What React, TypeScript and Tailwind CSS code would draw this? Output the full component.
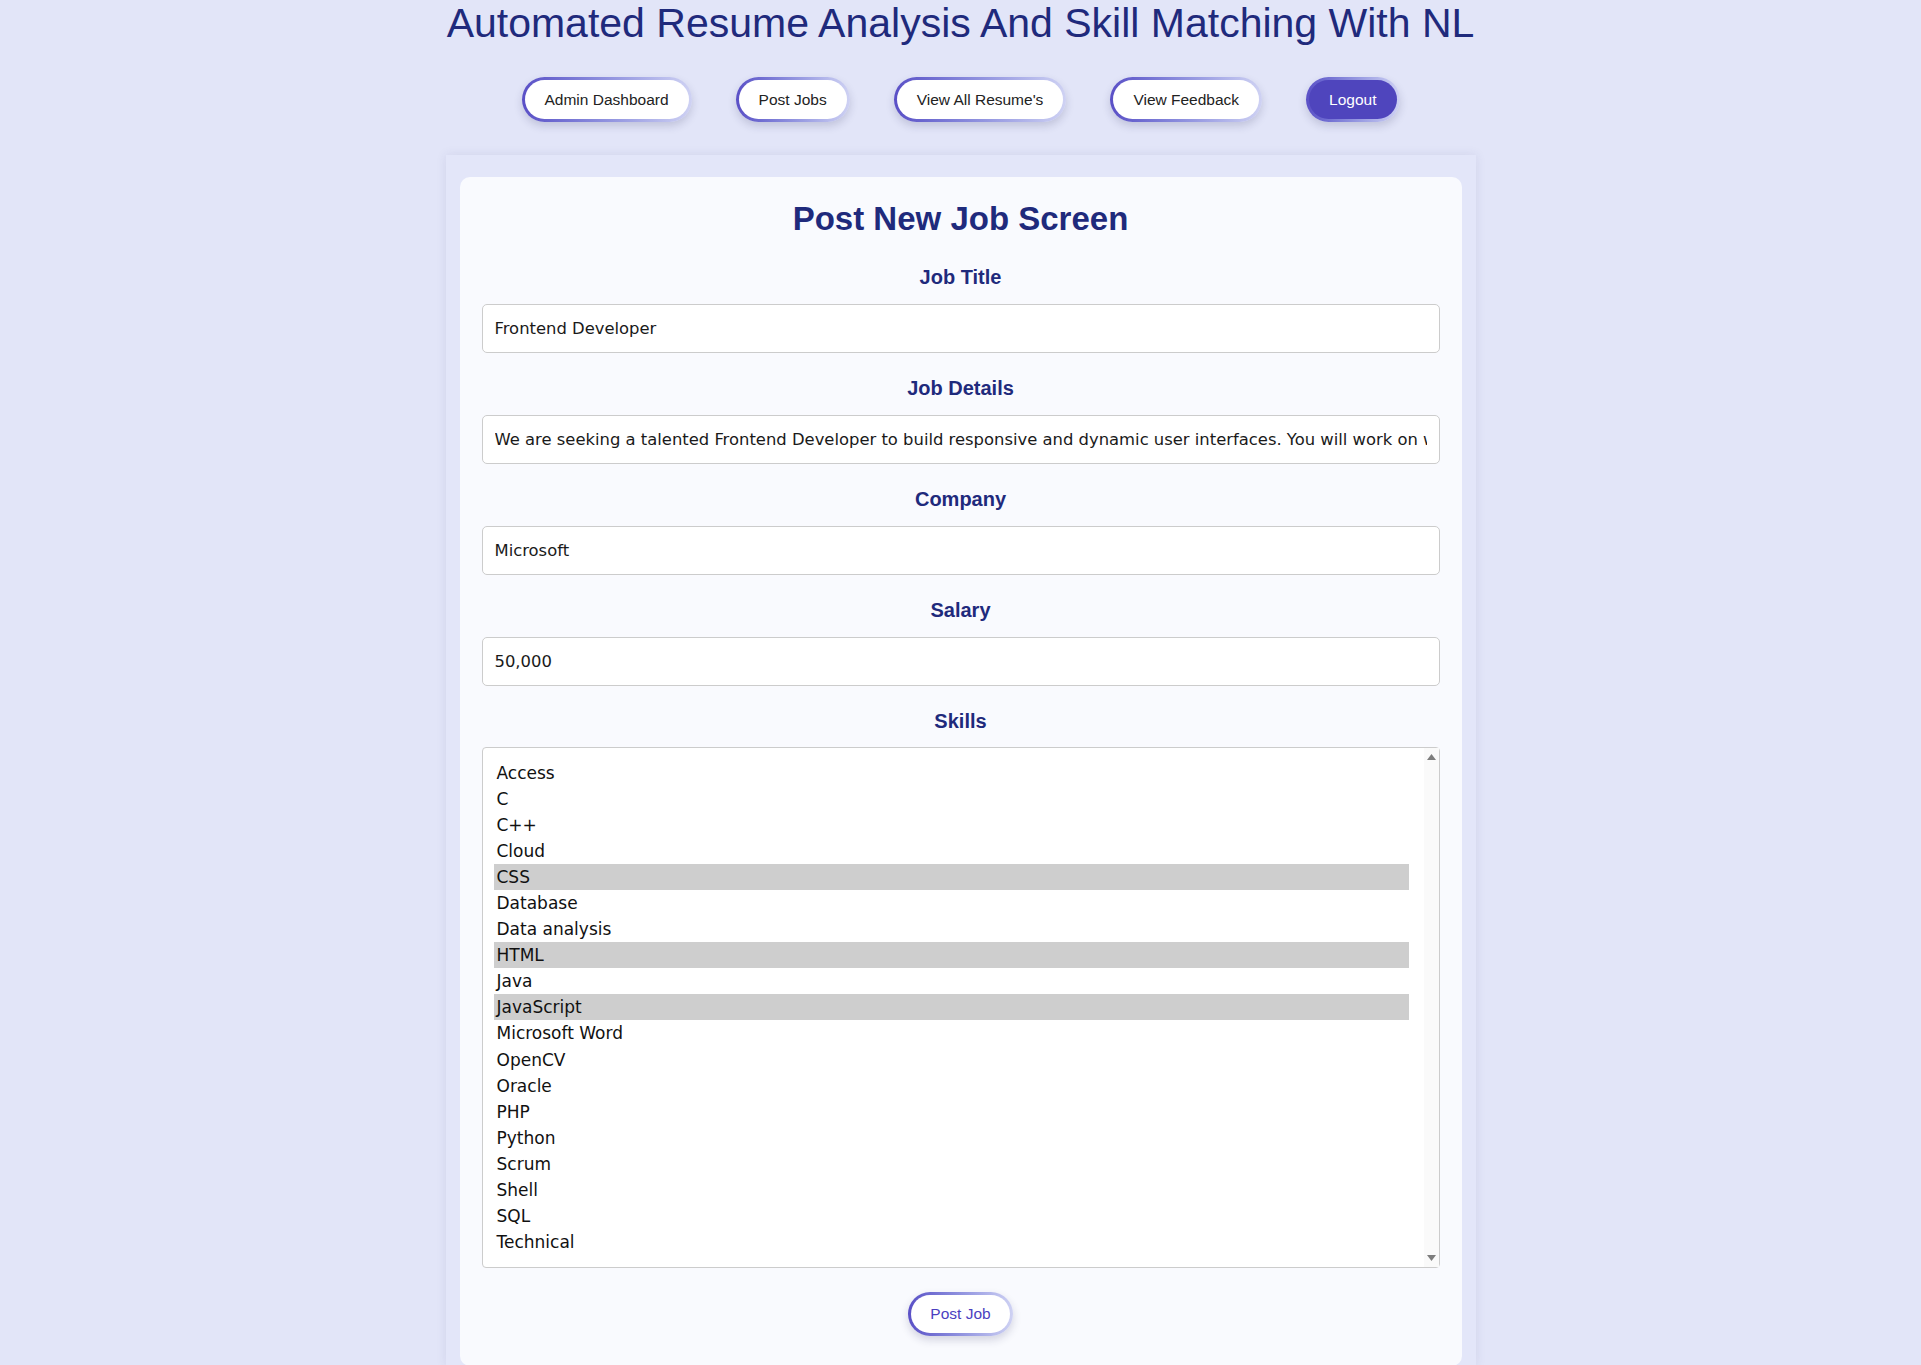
import { useState } from "react";

const navLinks = ["Admin Dashboard", "Post Jobs", "View All Resume's", "View Feedback"];

const skills = [
  "Access",
  "C",
  "C++",
  "Cloud",
  "CSS",
  "Database",
  "Data analysis",
  "HTML",
  "Java",
  "JavaScript",
  "Microsoft Word",
  "OpenCV",
  "Oracle",
  "PHP",
  "Python",
  "Scrum",
  "Shell",
  "SQL",
  "Technical",
];

const fields = [
  { label: "Job Title", value: "Frontend Developer" },
  {
    label: "Job Details",
    value:
      "We are seeking a talented Frontend Developer to build responsive and dynamic user interfaces. You will work on with designers and backend engineers to deliver great products.",
  },
  { label: "Company", value: "Microsoft" },
  { label: "Salary", value: "50,000" },
];

const PillButton = ({ text, filled = false }: { text: string; filled?: boolean }) => (
  <div className="rounded-full bg-gradient-to-r from-[#5a4fc6] to-[#cfd2f3] p-[3px] shadow-[0_4px_8px_rgba(40,40,90,0.18)]">
    <div
      className={`h-[39px] rounded-full px-[20px] flex items-center text-[15.5px] font-['Liberation_Sans',Arial,sans-serif] ${
        filled ? "bg-[#4f45bd] text-white" : "bg-white text-[#222]"
      }`}
    >
      {text}
    </div>
  </div>
);

export default function App() {
  const [selected] = useState<string[]>(["CSS", "HTML", "JavaScript"]);

  return (
    <div className="min-h-screen bg-[#e2e5f8] flex flex-col items-center font-['Liberation_Sans',Arial,sans-serif]">
      <h1 className="text-[41px] leading-[47px] text-[#1f2a7c] text-center">
        Automated Resume Analysis And Skill Matching With NL
      </h1>

      <nav className="mt-[30px] flex justify-center gap-[44px]">
        {navLinks.map((l) => (
          <PillButton key={l} text={l} />
        ))}
        <PillButton text="Logout" filled />
      </nav>

      <div className="mt-[33px] w-[1030px] px-[14px] pt-[22px] bg-[#e3e6f9] shadow-[0_0_10px_rgba(60,60,120,0.10)]">
        <div className="rounded-[10px] bg-[#f9fafe] px-[22px] pt-[23px] pb-[30px]">
          <h2 className="text-[33px] leading-[37px] font-bold text-[#1f2a7c] text-center">
            Post New Job Screen
          </h2>

          <div className="mt-[5px]">
            {fields.map((f) => (
              <div key={f.label} className="flex flex-col">
                <label className="mt-[23.5px] mb-[15px] text-[20px] leading-[23px] font-bold text-[#1f2a7c] text-center">
                  {f.label}
                </label>
                <input
                  readOnly
                  value={f.value}
                  className="h-[49.5px] w-full rounded-[5px] border border-[#cccccc] bg-white px-[12px] text-[16.4px] text-[#1a1a1a] font-['DejaVu_Sans',sans-serif] outline-none"
                />
              </div>
            ))}

            <div className="flex flex-col">
              <label className="mt-[23.5px] mb-[14px] text-[20px] leading-[23px] font-bold text-[#1f2a7c] text-center">
                Skills
              </label>
              <div className="h-[521px] flex rounded-[4px] border border-[#cccccc] bg-white">
                <ul className="flex-1 pl-[11px] pr-[15px] pt-[12px] font-['DejaVu_Sans',sans-serif] text-[17px] text-[#111]">
                  {skills.map((s) => (
                    <li
                      key={s}
                      className={`h-[26.1px] leading-[26px] px-[3px] ${
                        selected.includes(s) ? "bg-[#cecece]" : ""
                      }`}
                    >
                      {s}
                    </li>
                  ))}
                </ul>
                <div className="w-[15px] bg-[#fafafa] flex flex-col items-center justify-between py-[6px]">
                  <svg width="9" height="6" viewBox="0 0 9 6">
                    <path d="M4.5 0 L9 6 L0 6 Z" fill="#7d7d7d" />
                  </svg>
                  <svg width="9" height="6" viewBox="0 0 9 6">
                    <path d="M0 0 L9 0 L4.5 6 Z" fill="#7d7d7d" />
                  </svg>
                </div>
              </div>
            </div>

            <div className="mt-[24px] flex justify-center">
              <div className="rounded-full bg-gradient-to-r from-[#5a4fc6] to-[#cfd2f3] p-[3px] shadow-[0_4px_8px_rgba(40,40,90,0.18)]">
                <div className="h-[38px] rounded-full bg-white px-[19px] flex items-center text-[15.5px] text-[#4b3fbf]">
                  Post Job
                </div>
              </div>
            </div>
          </div>
        </div>
      </div>
    </div>
  );
}
